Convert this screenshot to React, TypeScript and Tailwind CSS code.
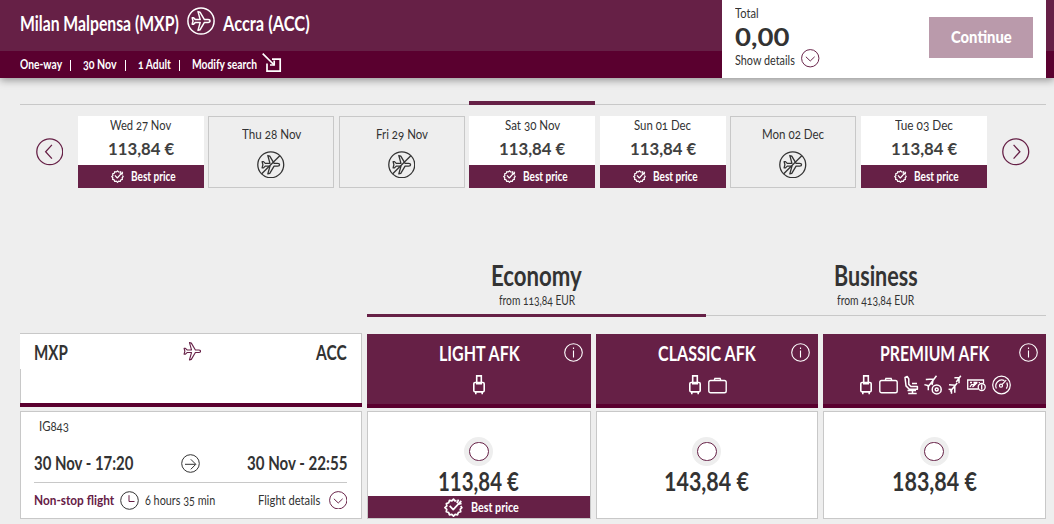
import React, { useLayoutEffect, useRef, useState } from "react";

interface FitProps {
  w: number;
  className?: string;
  children: string;
}

// Squeezes a line of text horizontally to the given width
const Fit = ({ w, className = "", children }: FitProps) => {
  const ref = useRef<HTMLSpanElement>(null);
  const [scale, setScale] = useState(1);

  useLayoutEffect(() => {
    if (ref.current) setScale(w / ref.current.offsetWidth);
  }, [w, children]);

  return (
    <span className={`block shrink-0 whitespace-nowrap ${className}`} style={{ width: w }}>
      <span ref={ref} className="inline-block origin-left" style={{ transform: `scaleX(${scale})` }}>
        {children}
      </span>
    </span>
  );
};

interface IconProps {
  className?: string;
}

const PLANE =
  "M23 14c0-.8-.8-1.4-2-1.4h-3.6L13 5.2l-2-.6 2.2 8H8.4l-1.8-1.8H5.2L6 14l-.8 3.2h1.4l1.8-1.8h4.8l-2.2 8 2-.6 4.4-7.4H21c1.2 0 2-.6 2-1.4z";

const PlaneIcon = ({ className = "" }: IconProps) => (
  <svg viewBox="4.2 4 19.6 20" className={className} fill="none" stroke="currentColor" strokeWidth="1.2" strokeLinejoin="round">
    <path d={PLANE} />
  </svg>
);

const PlaneCircleIcon = ({ className = "" }: IconProps) => (
  <svg viewBox="0 0 28 28" className={className} fill="none" stroke="currentColor" strokeWidth="1.5" strokeLinejoin="round">
    <circle cx="14" cy="14" r="13.1" />
    <path d={PLANE} />
  </svg>
);

const NoFlightIcon = ({ className = "" }: IconProps) => (
  <svg viewBox="0 0 28 28" className={className} fill="none" stroke="currentColor" strokeWidth="1.3" strokeLinejoin="round">
    <circle cx="14" cy="14" r="13.2" />
    <path d={PLANE} />
    <path d="M4.8 23.2L23.2 4.8" />
  </svg>
);

const ChevronCircle = ({ className = "", d }: IconProps & { d: string }) => (
  <svg viewBox="0 0 28 28" className={className} fill="none" stroke="currentColor" strokeWidth="1.3">
    <circle cx="14" cy="14" r="13.2" />
    <path d={d} />
  </svg>
);

const DownCircle = ({ className = "" }: IconProps) => (
  <svg viewBox="0 0 19 19" className={className} fill="none" stroke="currentColor" strokeWidth="1">
    <circle cx="9.5" cy="9.5" r="8.9" />
    <path d="M5 8l4.5 4.3L14 8" />
  </svg>
);

const ArrowCircle = () => (
  <svg viewBox="0 0 19 19" className="size-[19px] text-[#333]" fill="none" stroke="currentColor" strokeWidth="1">
    <circle cx="9.5" cy="9.5" r="8.8" />
    <path d="M4 10.3h10.5M9.8 5.3l5 5-5 5" />
  </svg>
);

const ClockIcon = () => (
  <svg viewBox="0 0 19 19" className="size-[19px]" fill="none" stroke="#333" strokeWidth="1">
    <circle cx="9.5" cy="9.5" r="8.8" />
    <path d="M9 4.2v6.3h5.5" stroke="#662046" />
  </svg>
);

const EditIcon = () => (
  <svg viewBox="0 0 20 20" className="size-5" fill="none" stroke="white" strokeWidth="1.7">
    <path d="M.7.7l11.5 11.3M10 6.2h8.2v11.9H5V10.5" />
    <path d="M12.2 7.5V12H8" />
  </svg>
);

const BadgeIcon = ({ className = "" }: IconProps) => (
  <svg viewBox="0 0 20 20" className={className} fill="none" stroke="white" strokeWidth="1.8" strokeLinejoin="round">
    <path d="M13.2 2.7l-1.7.3L10 1.2 8.3 3 5.7 2.5 5 5 2.5 5.9 3 8.4 1 10.2l1.9 1.7-.5 2.5 2.5.8.8 2.5 2.5-.5 1.8 1.9 1.8-1.9 2.5.5.8-2.5 2.5-.8-.5-2.5 1.7-1.7-1.2-1.7" />
    <path d="M6 8.3l3.7 4L18.2 3M15.3 1.8l-1.7 3.7M18.5 5.6l-3 .9" />
  </svg>
);

const InfoIcon = () => (
  <svg viewBox="0 0 19 19" className="size-[19px]" fill="none" stroke="white" strokeWidth="1.1">
    <circle cx="9.5" cy="9.5" r="8.8" />
    <path d="M9.5 7.5v7M9.5 4.5v1.5" />
  </svg>
);

const SuitcaseIcon = () => (
  <svg viewBox="0 0 12 20" className="mr-[1.5px] h-5 w-3" fill="none" stroke="white" strokeWidth="1.6">
    <path d="M3.7 7.3V.9h4.6v6.4" />
    <rect x=".8" y="7.5" width="10.4" height="9.4" rx="1.3" />
    <path d="M2.8 17v2.3M9.2 17v2.3M3 8.8h6" />
  </svg>
);

const BriefcaseIcon = () => (
  <svg viewBox="0 0 19 20" className="h-5 w-[19px]" fill="none" stroke="white" strokeWidth="1.4">
    <rect x=".8" y="5.5" width="17.4" height="12.3" rx="1.8" />
    <path d="M6.3 5.3l.6-1.8h5.2l.6 1.8" />
  </svg>
);

const SeatIcon = () => (
  <svg viewBox="0 0 15 20" className="h-5 w-[15px]" fill="none" stroke="white" strokeWidth="1.5" strokeLinejoin="round">
    <path d="M1 2.5l2.2-1 1.6 2.4v5.5l2.1 2.1h6.5v2.7H5.3L2 10.9zM8 8.4h5M3.5 15.6h8.5M8.5 15.7v2.6M4.2 18.5h8.5" />
  </svg>
);

const PlaneReturnIcon = () => (
  <svg viewBox="0 0 18 20" className="h-5 w-[18px]" fill="none" stroke="white" strokeWidth="1.5">
    <path d="M12.5.8L3.8 12.2M10.2 4L1.8 4.6M8.9 6.2L8 10M4.8 10.8L.4 9.6M4.3 11.3v4" />
    <circle cx="12.7" cy="14.4" r="4.5" />
    <circle cx="12.7" cy="14.4" r="1.5" />
  </svg>
);

const PlanesIcon = () => (
  <svg viewBox="0 0 14 20" className="h-5 w-3.5" fill="none" stroke="white" strokeWidth="1.5">
    <path d="M12.8.8L8.3 7M11.6 2.8L6.4 2.8M11 3.4v4.8M9.2 8L2.2 16.4M7.4 10.2L1 9.8M6.8 11v6.8M3.7 14.4L.6 14.2M3.5 14.5v4.2" />
  </svg>
);

const TicketIcon = () => (
  <svg viewBox="0 0 19 20" className="h-5 w-[19px]" fill="none" stroke="white" strokeWidth="1.3">
    <path d="M11.5 14H.7V5h15.8v3.2" />
    <path d="M3 7.5h2M6.5 7.5h4M3 12l1.5-2.3h1.7L10 7.8M5.5 12l4.2-4M12.3 7v1" />
    <circle cx="14.7" cy="12" r="3.5" />
    <path d="M14.7 9.5v5" />
  </svg>
);

const GaugeIcon = () => (
  <svg viewBox="0 0 19 20" className="h-5 w-[19px]" fill="none" stroke="white" strokeWidth="1.2">
    <circle cx="9.5" cy="10" r="8.8" />
    <path d="M4.4 13.6a6 6 0 0 1 8-8M14.8 7.6a6 6 0 0 1-.5 6M10.2 9.4l4-4.2" />
    <circle cx="9" cy="10.7" r="1.5" />
  </svg>
);

interface Day {
  label: string;
  width: number;
  price?: string;
}

const days: Day[] = [
  { label: "Wed 27 Nov", width: 61, price: "113,84 €" },
  { label: "Thu 28 Nov", width: 59 },
  { label: "Fri 29 Nov", width: 52 },
  { label: "Sat 30 Nov", width: 55, price: "113,84 €" },
  { label: "Sun 01 Dec", width: 57, price: "113,84 €" },
  { label: "Mon 02 Dec", width: 62 },
  { label: "Tue 03 Dec", width: 58, price: "113,84 €" },
];

const fares = [
  { name: "LIGHT AFK", width: 81, price: "113,84 €", priceWidth: 81, best: true, icons: [SuitcaseIcon] },
  { name: "CLASSIC AFK", width: 98, price: "143,84 €", priceWidth: 85, best: false, icons: [SuitcaseIcon, BriefcaseIcon] },
  {
    name: "PREMIUM AFK",
    width: 109,
    price: "183,84 €",
    priceWidth: 85,
    best: false,
    icons: [SuitcaseIcon, BriefcaseIcon, SeatIcon, PlaneReturnIcon, PlanesIcon, TicketIcon, GaugeIcon],
  },
];

const Header = () => (
  <header className="relative flex h-[78px] bg-[#662046] text-white shadow-[0_2px_8px_rgba(0,0,0,0.4)]">
    <div className="w-[722px]">
      <div className="flex h-[51px] pl-5">
        <Fit w={159} className="text-[20px] font-bold leading-[47px]">Milan Malpensa (MXP)</Fit>
        <PlaneCircleIcon className="ml-2 mt-[7px] size-7" />
        <Fit w={87} className="ml-2 text-[20px] font-bold leading-[47px]">Accra (ACC)</Fit>
      </div>
      <div className="flex h-[27px] bg-[#5a002f] pl-5 text-[12.5px] font-bold leading-[28px]">
        <Fit w={42}>One-way</Fit>
        <span className="ml-2 mt-[9px] h-[11px] w-px bg-white" />
        <Fit w={34} className="ml-3 oldstyle-nums">30 Nov</Fit>
        <span className="ml-2 mt-[9px] h-[11px] w-px bg-white" />
        <Fit w={33} className="ml-3 oldstyle-nums">1 Adult</Fit>
        <span className="ml-2 mt-[9px] h-[11px] w-px bg-white" />
        <Fit w={65} className="ml-3">Modify search</Fit>
        <div className="ml-[5px] mt-0.5"><EditIcon /></div>
      </div>
    </div>
    <div className="flex w-[324px] justify-between bg-white pl-[13px] pr-[13px] text-[#333]">
      <div>
        <Fit w={24} className="mt-[5px] text-[13px] leading-4">Total</Fit>
        <Fit w={54} className="mt-1 text-[24px] font-bold leading-6 lining-nums">0,00</Fit>
        <div className="flex">
          <Fit w={60} className="text-[13px] leading-[23px]">Show details</Fit>
          <DownCircle className="ml-[6px] size-[18.5px] text-[#662046]" />
        </div>
      </div>
      <button className="mt-[17px] flex h-[41px] w-[104px] justify-center bg-[#ba9aab] text-white">
        <Fit w={61} className="text-left text-[16px] font-black leading-[39px]">Continue</Fit>
      </button>
    </div>
    <div className="mt-[51px] h-[27px] flex-1 bg-[#5a002f]" />
  </header>
);

const DayTile = ({ day }: { day: Day }) =>
  day.price ? (
    <div className="flex h-[72px] flex-col items-center bg-white">
      <Fit w={day.width} className="text-[13px] leading-[18px] oldstyle-nums">{day.label}</Fit>
      <Fit w={66} className="mt-1 text-[17px] font-bold leading-[21px] text-[#404040]">{day.price}</Fit>
      <div className="mt-auto flex h-[23px] w-full items-center justify-center gap-[7px] bg-[#662046] pl-1.5 text-white">
        <BadgeIcon className="size-[13px]" />
        <Fit w={45} className="text-[12.5px] font-bold leading-6">Best price</Fit>
      </div>
    </div>
  ) : (
    <div className="flex h-[72px] flex-col items-center border border-[#c8c8c8]">
      <Fit w={day.width} className="mt-2 text-[13px] leading-[18px] oldstyle-nums">{day.label}</Fit>
      <NoFlightIcon className="mt-[7.5px] size-[27.5px]" />
    </div>
  );

const DateStrip = () => (
  <section className="ml-5 w-[1026px]">
    <div className="flex h-[4px] items-end justify-center">
      <div className="h-px w-[449px] bg-[#c8c8c8]" />
      <div className="h-full w-[126px] bg-[#662046]" />
      <div className="h-px flex-1 bg-[#c8c8c8]" />
    </div>
    <div className="mt-[11px] flex">
      <ChevronCircle d="M16.2 7l-6.4 7 6.4 7" className="ml-[15.5px] mt-[22px] size-[27.5px] shrink-0 text-[#662046]" />
      <div className="ml-[14.7px] grid w-[909px] shrink-0 grid-cols-7 gap-[4.5px]">
        {days.map((day) => (
          <DayTile key={day.label} day={day} />
        ))}
      </div>
      <ChevronCircle d="M11.8 7l6.4 7-6.4 7" className="ml-[15.8px] mt-[22px] size-[27.5px] shrink-0 text-[#662046]" />
    </div>
  </section>
);

const CabinTabs = () => (
  <div className="ml-[367px] mt-[72px] flex w-[679px]">
    <div className="flex h-[57px] w-[339px] flex-col items-center border-b-[3px] border-[#662046]">
      <Fit w={91} className="text-[29px] font-bold leading-[30px]">Economy</Fit>
      <Fit w={76} className="mt-[2px] text-[12.5px] leading-[18px] oldstyle-nums">from 113,84 EUR</Fit>
    </div>
    <div className="flex h-14 flex-1 flex-col items-center border-b border-[#c8c8c8] pr-px">
      <Fit w={84} className="text-[29px] font-bold leading-[30px]">Business</Fit>
      <Fit w={77} className="mt-[2px] text-[12.5px] leading-[18px] oldstyle-nums">from 413,84 EUR</Fit>
    </div>
  </div>
);

const FlightCard = () => (
  <div className="flex flex-col border border-[#c8c8c8] bg-white pl-[13px] pr-3.5">
    <Fit w={30} className="ml-[5px] mt-1.5 text-[12.5px] leading-[18px] oldstyle-nums">IG843</Fit>
    <div className="mt-[15px] flex items-center justify-between text-[19px] font-bold leading-6">
      <Fit w={99}>30 Nov - 17:20</Fit>
      <ArrowCircle />
      <Fit w={100}>30 Nov - 22:55</Fit>
    </div>
    <div className="mt-[7px] h-px bg-[#c8c8c8]" />
    <div className="mt-[7px] flex items-center text-[13px] leading-[20px]">
      <Fit w={80} className="font-bold text-[#662046]">Non-stop flight</Fit>
      <div className="ml-[6px]"><ClockIcon /></div>
      <Fit w={70} className="ml-[6px] oldstyle-nums">6 hours 35 min</Fit>
      <Fit w={62} className="ml-auto">Flight details</Fit>
      <DownCircle className="ml-[9px] size-[18.5px] text-[#662046]" />
    </div>
  </div>
);

const FareTable = () => (
  <div className="ml-5 mt-4 grid w-[1026px] grid-cols-[342px_224px_222px_223px] grid-rows-[75px_108px] gap-x-[5px] gap-y-[3px]">
    <div className="mb-px flex flex-col border-b-4 border-t border-b-[#5a002f] border-t-[#c8c8c8] bg-white">
      <div className="flex h-[35px] justify-between border-r border-[#c8c8c8] pl-3.5 pr-3.5 text-[20px] font-bold leading-[36px]">
        <Fit w={34}>MXP</Fit>
        <PlaneIcon className="mt-2 size-[18.5px] text-[#662046]" />
        <Fit w={31}>ACC</Fit>
      </div>
      <div className="flex-1 border-x border-[#c8c8c8]" />
    </div>
    {fares.map((fare) => (
      <div key={fare.name} className="relative mt-px flex flex-col items-center border-b-4 border-[#5a002f] bg-[#662046] text-white">
        <Fit w={fare.width} className="text-[20px] font-bold leading-[38px]">{fare.name}</Fit>
        <div className="absolute right-[8.5px] top-[9px]"><InfoIcon /></div>
        <div className="mt-[3px] flex gap-[5.5px] pl-[2px]">
          {fare.icons.map((Icon, i) => (
            <Icon key={i} />
          ))}
        </div>
      </div>
    ))}
    <FlightCard />
    {fares.map((fare) => (
      <div key={fare.name} className="flex flex-col items-center border border-[#c8c8c8] bg-white pr-px">
        <div className="mt-[25px] flex size-[29px] shrink-0 items-center justify-center rounded-full bg-[#eee]">
          <div className="h-[19px] w-5 rounded-full border border-[#662046] bg-white" />
        </div>
        <Fit w={fare.priceWidth} className="text-[26px] font-bold leading-[30px]">{fare.price}</Fit>
        {fare.best && (
          <div className="-mr-px mt-auto flex h-[22px] w-[222px] items-center justify-center gap-2 bg-[#662046] pl-1 text-white">
            <BadgeIcon className="size-[19px]" />
            <Fit w={48} className="text-[13px] font-bold leading-[20px]">Best price</Fit>
          </div>
        )}
      </div>
    ))}
  </div>
);

export default function App() {
  return (
    <div className="h-[524px] w-[1054px] overflow-hidden bg-[#eee] font-['Lato',sans-serif] text-[#333]">
      <Header />
      <div className="h-[23px]" />
      <DateStrip />
      <CabinTabs />
      <FareTable />
    </div>
  );
}
